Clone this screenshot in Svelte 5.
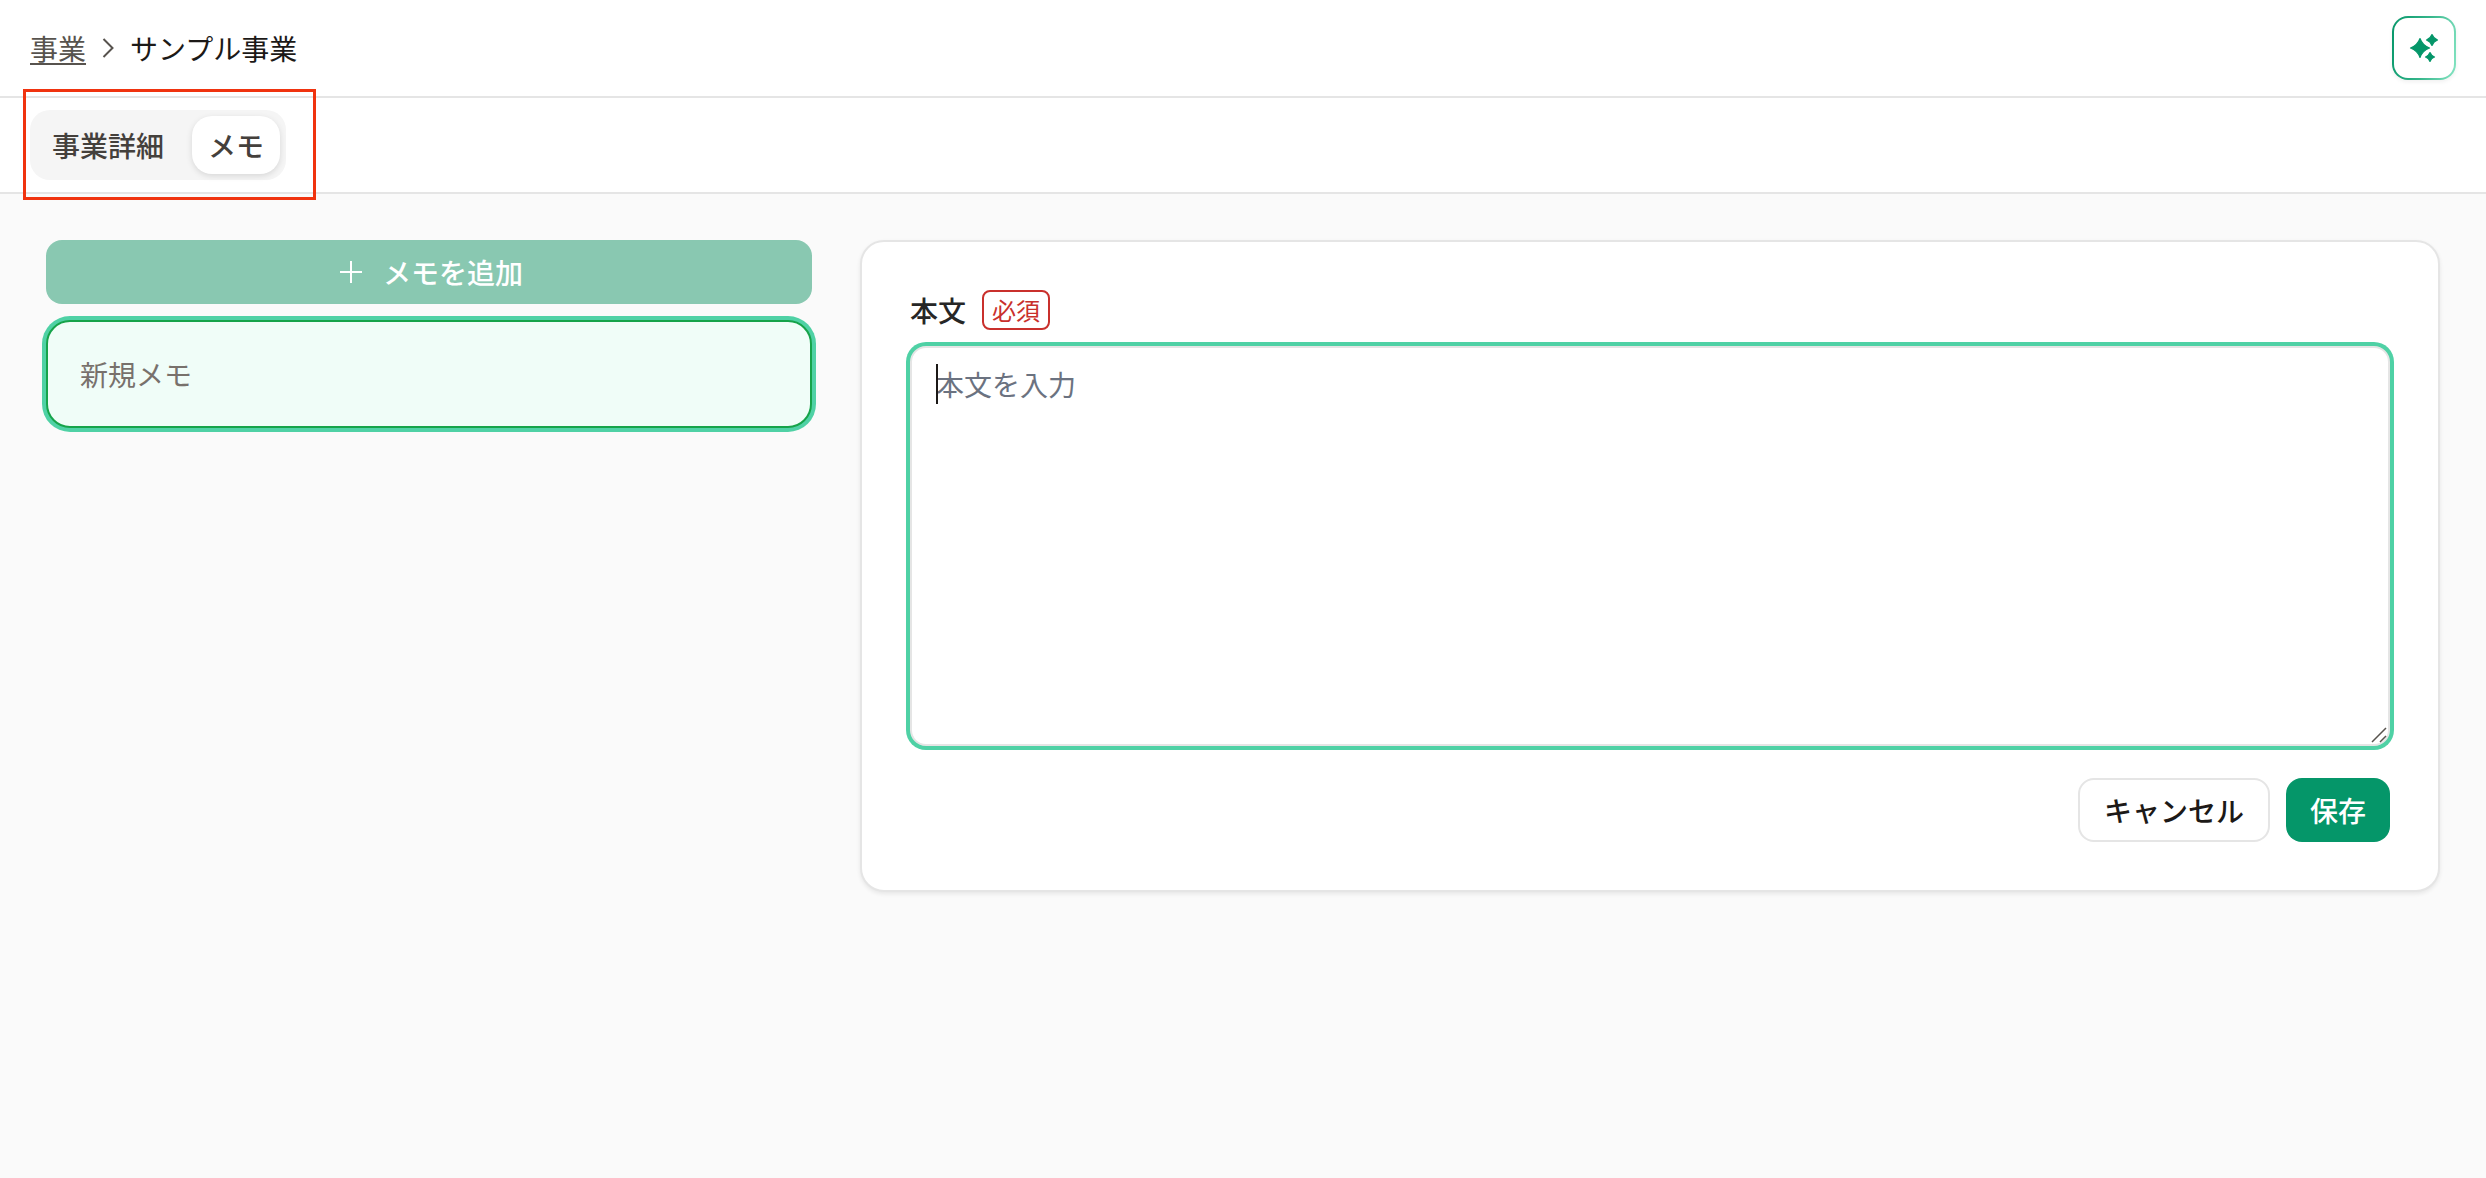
<script lang="ts">
  type Tab = {
    id: string;
    label: string;
  };

  const tabs: Tab[] = [
    { id: "detail", label: "事業詳細" },
    { id: "memo", label: "メモ" },
  ];

  let activeTab = $state("memo");
  let body = $state("");
  let editing = $state(true);

  const cancel = () => {
    body = "";
    editing = false;
  };

  const save = (event: SubmitEvent) => {
    event.preventDefault();
    editing = false;
  };
</script>

<div class="page">
  <header class="header">
    <nav class="breadcrumb" aria-label="パンくずリスト">
      <a href="#projects">事業</a>
      <svg class="chevron" viewBox="0 0 12 20" aria-hidden="true">
        <path d="M1.5 1 L10.5 10 L1.5 19" />
      </svg>
      <span class="current">サンプル事業</span>
    </nav>
    <button class="ai-btn" type="button" aria-label="AI">
      <svg viewBox="0 0 32 32" aria-hidden="true">
        <path d="M12 6.5 Q14.5 13.5 21.5 16 Q14.5 18.5 12 25.5 Q9.5 18.5 2.5 16 Q9.5 13.5 12 6.5 Z" />
        <path d="M24 2.5 Q25.5 6.5 29.5 8 Q25.5 9.5 24 13.5 Q22.5 9.5 18.5 8 Q22.5 6.5 24 2.5 Z" />
        <path d="M22 20.5 Q23.2 23.8 26.5 25 Q23.2 26.2 22 29.5 Q20.8 26.2 17.5 25 Q20.8 23.8 22 20.5 Z" />
      </svg>
    </button>
  </header>

  <div class="tab-bar">
    <div class="tabs" role="tablist">
      {#each tabs as tab (tab.id)}
        <button
          class="tab"
          class:active={activeTab === tab.id}
          type="button"
          role="tab"
          aria-selected={activeTab === tab.id}
          onclick={() => (activeTab = tab.id)}
        >
          {tab.label}
        </button>
      {/each}
    </div>
    <div class="highlight"></div>
  </div>

  <main class="content">
    <div class="memo-list">
      <button class="add-btn" type="button" disabled={editing} onclick={() => (editing = true)}>
        <svg viewBox="0 0 32 32" aria-hidden="true">
          <path d="M16 5 V27 M5 16 H27" />
        </svg>
        メモを追加
      </button>
      <button class="memo-item" type="button">新規メモ</button>
    </div>

    <form class="card" onsubmit={save}>
      <div class="field-head">
        <label for="memoBody">本文</label>
        <span class="required">必須</span>
      </div>
      <div class="editor">
        <textarea id="memoBody" bind:value={body} placeholder="本文を入力" required></textarea>
        {#if editing && body === ""}
          <span class="caret"></span>
        {/if}
        <svg class="grip" viewBox="0 0 16 16" aria-hidden="true">
          <path d="M1 15 L15 1 M9 15 L15 9" />
        </svg>
      </div>
      <div class="actions">
        <button class="cancel-btn" type="button" onclick={cancel}>キャンセル</button>
        <button class="save-btn" type="submit">保存</button>
      </div>
    </form>
  </main>
</div>

<style>
  :global(body) {
    margin: 0;
    background: #fafafa;
  }

  .page,
  .page button,
  .page textarea {
    font-family: "Noto Sans CJK JP", "Noto Sans", sans-serif;
    font-size: 28px;
    line-height: 40px;
  }

  .page {
    min-height: 100vh;
    background: #fafafa;
    color: #262626;
  }

  .page * {
    box-sizing: border-box;
  }

  button {
    margin: 0;
    cursor: pointer;
  }

  .header {
    display: flex;
    align-items: center;
    justify-content: space-between;
    padding: 16px 30px;
    background: #fff;
    border-bottom: 2px solid #e5e5e5;
  }

  .breadcrumb {
    display: flex;
    align-items: center;
    gap: 16px;
  }

  .breadcrumb a {
    color: #57534e;
    text-decoration: underline;
    text-decoration-thickness: 2px;
    text-underline-offset: 3px;
  }

  .chevron {
    width: 12px;
    height: 20px;
    fill: none;
    stroke: #57534e;
    stroke-width: 2;
  }

  .current {
    color: #1c1917;
  }

  .ai-btn {
    display: flex;
    align-items: center;
    justify-content: center;
    width: 64px;
    height: 64px;
    padding: 0;
    border: 2px solid transparent;
    border-radius: 16px;
    background:
      linear-gradient(#fff, #fff) padding-box,
      linear-gradient(100deg, #059669, #34b58a 50%, #86e5c3) border-box;
    box-shadow: 0 2px 4px rgba(0, 0, 0, 0.06);
  }

  .ai-btn svg {
    width: 32px;
    height: 32px;
    fill: #059669;
    stroke: #059669;
    stroke-width: 1.2;
    stroke-linejoin: round;
  }

  .tab-bar {
    position: relative;
    display: flex;
    padding: 12px 30px;
    background: #fff;
    border-bottom: 2px solid #e5e5e5;
  }

  .tabs {
    display: flex;
    gap: 12px;
    padding: 6px;
    border-radius: 20px;
    background: #f5f5f5;
  }

  .tab {
    padding: 9px 16px;
    border: none;
    border-radius: 20px;
    background: none;
    color: #44403c;
    font-weight: 500;
  }

  .tab.active {
    background: #fff;
    box-shadow: 0 2px 6px rgba(0, 0, 0, 0.12);
  }

  .highlight {
    position: absolute;
    top: -9px;
    bottom: -8px;
    left: 23px;
    width: 293px;
    border: 3px solid #f0330f;
    pointer-events: none;
  }

  .content {
    display: grid;
    grid-template-columns: repeat(3, 1fr);
    align-items: start;
    gap: 48px;
    padding: 46px;
  }

  .memo-list {
    display: flex;
    flex-direction: column;
    gap: 16px;
  }

  .add-btn {
    display: flex;
    align-items: center;
    justify-content: center;
    gap: 16px;
    height: 64px;
    padding: 0 24px;
    border: none;
    border-radius: 16px;
    background: #059669;
    color: #fff;
    font-weight: 500;
  }

  .add-btn:disabled {
    background: #89c8b1;
    cursor: default;
  }

  .add-btn svg {
    width: 32px;
    height: 32px;
    stroke: #fff;
    stroke-width: 2;
  }

  .memo-item {
    padding: 32px;
    border: 2px solid #16a34a;
    border-radius: 24px;
    background: #f0fdf8;
    box-shadow: 0 0 0 4px #4fd1a5;
    color: #78716c;
    text-align: left;
  }

  .card {
    grid-column: span 2;
    padding: 48px;
    border: 2px solid #e5e5e5;
    border-radius: 24px;
    background: #fff;
    box-shadow: 0 2px 4px rgba(0, 0, 0, 0.08);
  }

  .field-head {
    display: flex;
    align-items: center;
    gap: 16px;
    margin-bottom: 16px;
  }

  .field-head label {
    font-weight: 500;
  }

  .required {
    padding: 0 8px;
    border: 2px solid #c9302c;
    border-radius: 8px;
    color: #c9302c;
    font-size: 24px;
    line-height: 36px;
  }

  .editor {
    position: relative;
    display: flex;
  }

  textarea {
    width: 100%;
    height: 400px;
    margin: 0;
    padding: 16px 24px;
    border: 2px solid #e5e5e5;
    border-radius: 16px;
    outline: none;
    background: #fff;
    box-shadow: 0 0 0 4px #4fd1a5;
    color: #1c1917;
    resize: none;
  }

  textarea::placeholder {
    color: #6b7280;
    opacity: 1;
  }

  .caret {
    position: absolute;
    top: 18px;
    left: 26px;
    width: 2px;
    height: 40px;
    background: #1c1917;
  }

  .grip {
    position: absolute;
    right: 3px;
    bottom: 3px;
    width: 16px;
    height: 16px;
    stroke: #57534e;
    stroke-width: 1.5;
  }

  .actions {
    display: flex;
    justify-content: flex-end;
    gap: 16px;
    margin-top: 32px;
  }

  .cancel-btn,
  .save-btn {
    height: 64px;
    padding: 0 24px;
    border: none;
    border-radius: 16px;
    font-weight: 500;
  }

  .cancel-btn {
    border: 2px solid #e5e5e5;
    background: #fff;
    color: #1c1917;
  }

  .save-btn {
    background: #059669;
    color: #fff;
  }
</style>
